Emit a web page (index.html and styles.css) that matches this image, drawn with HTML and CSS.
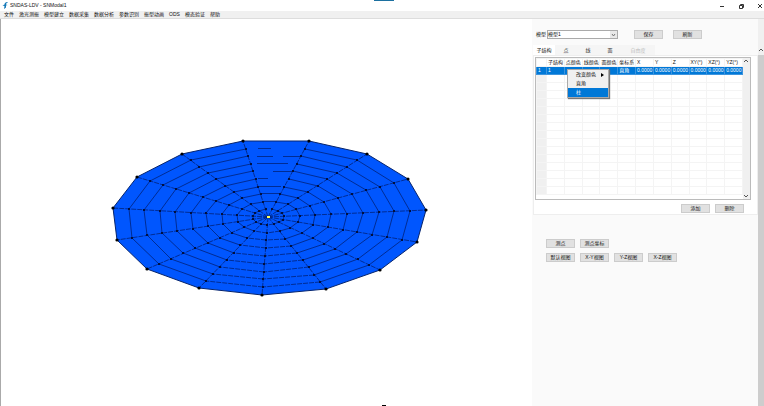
FILE: index.html
```
<!DOCTYPE html>
<html lang="zh-CN">
<head>
    <meta charset="UTF-8">
    <meta name="viewport" content="width=device-width, initial-scale=1.0">
    <title>SNDAS-LDV - SNModal1</title>
    <link rel="stylesheet" href="styles.css">
</head>
<body>
    <header class="titlebar">
        <svg class="logo" viewBox="0 0 12 14" width="6" height="7">
            <path d="M11 0 C7 0 5 2 5 5 L1 7 L5 8 L4 14 L8 11 L8 7 L11 6 L8 5 C8 3 9 2 11 2 Z" fill="#1479b8"/>
        </svg>
        <span class="title">SNDAS-LDV - SNModal1</span>
        <div class="top-handle"></div>
        <div class="window-buttons">
            <button class="win-btn" aria-label="最小化"><svg viewBox="0 0 6 6" width="6" height="6"><path d="M1 3.5h4"/></svg></button>
            <button class="win-btn" aria-label="还原"><svg viewBox="0 0 6 6" width="6" height="6"><path d="M1.5 2.5h3v3h-3zM2.5 2.5v-1h3v3h-1"/></svg></button>
            <button class="win-btn" aria-label="关闭"><svg viewBox="0 0 6 6" width="6" height="6"><path d="M1 1l4 4M5 1l-4 4"/></svg></button>
        </div>
    </header>

    <nav class="menubar">
        <a href="#">文件</a>
        <a href="#">激光测振</a>
        <a href="#">模型建立</a>
        <a href="#">数据采集</a>
        <a href="#">数据分析</a>
        <a href="#">参数识别</a>
        <a href="#">振型动画</a>
        <a href="#">ODS</a>
        <a href="#">模态验证</a>
        <a href="#">帮助</a>
    </nav>

    <main class="workspace">
        <section class="view">
            <svg class="mesh" id="mesh" viewBox="1 19 531 387"></svg>
        </section>

        <aside class="side">
            <div class="model-row">
                <label for="model">模型</label>
                <div class="select-box">
                    <select id="model"><option>模型1</option></select>
                    <svg class="select-arrow" viewBox="0 0 7 7" width="7" height="7"><path d="M2 3l1.5 2L5 3"/></svg>
                </div>
                <button class="button">保存</button>
                <button class="button">刷新</button>
            </div>

            <div class="tabs">
                <button class="tab active">子结构</button>
                <button class="tab">点</button>
                <button class="tab">线</button>
                <button class="tab">面</button>
                <button class="tab off" disabled>自由度</button>
            </div>

            <div class="tab-page">
                <div class="grid-box">
                    <div class="grid-wrap">
                        <table class="grid">
                            <colgroup><col class="c-num"><col span="11"></colgroup>
                            <thead>
                                <tr><th></th><th>子结构</th><th>点颜色</th><th>线颜色</th><th>面颜色</th><th>坐标系</th><th>X</th><th>Y</th><th>Z</th><th>XY(°)</th><th>XZ(°)</th><th>YZ(°)</th></tr>
                            </thead>
                            <tbody id="rows">
                                <tr class="selected"><td>1</td><td>1</td><td></td><td></td><td></td><td>直角</td><td>0.0000</td><td>0.0000</td><td>0.0000</td><td>0.0000</td><td>0.0000</td><td>0.0000</td></tr>
                            </tbody>
                        </table>
                    </div>
                    <div class="grid-scroll">
                        <svg viewBox="0 0 6 6" width="6" height="6"><path d="M1 4l2-2 2 2"/></svg>
                        <svg viewBox="0 0 6 6" width="6" height="6"><path d="M1 2l2 2 2-2"/></svg>
                    </div>
                    <div class="context-menu">
                        <button>改变颜色<svg viewBox="0 0 3 6" width="3" height="6"><path d="M0 1l3 2-3 2z"/></svg></button>
                        <button>直角</button>
                        <button class="current">柱</button>
                    </div>
                </div>
                <div class="grid-actions">
                    <button class="button">添加</button>
                    <button class="button">删除</button>
                </div>
            </div>

            <div class="view-buttons">
                <div class="button-row">
                    <button class="button">测点</button>
                    <button class="button">测点坐标</button>
                </div>
                <div class="button-row">
                    <button class="button">默认视图</button>
                    <button class="button">X-Y视图</button>
                    <button class="button">Y-Z视图</button>
                    <button class="button">X-Z视图</button>
                </div>
            </div>
        </aside>
        <div class="page-scroll"><svg viewBox="0 0 6 6" width="6" height="6"><path d="M1 4l2-2 2 2"/></svg></div>
    </main>

    <script>
        // empty rows of the table
        const rows = document.getElementById('rows');
        for (let i = 0; i < 15; i++) {
            const tr = document.createElement('tr');
            tr.innerHTML = '<td></td>'.repeat(12);
            rows.appendChild(tr);
        }

        // disc mesh: outer nodes, 10 rings
        const center = [268, 217];
        const outer = [
            [243, 141], [309, 141], [367, 154], [408, 179], [426, 210],
            [417, 242], [380, 270], [326, 289], [262, 295], [199, 288],
            [147, 269], [117, 240], [113, 208], [137, 177], [182, 154]
        ];
        const rings = 10;
        const node = (p, r) => [
            Math.round(center[0] + (p[0] - center[0]) * r / rings),
            Math.round(center[1] + (p[1] - center[1]) * r / rings)
        ];
        // visible parts of the rings between the two top spokes
        const topParts = {
            9: 'M258 148.5h13', 8: 'M257 156.5h16M283 156.5h17', 7: 'M257 163.5h31',
            6: 'M273 171.5h21', 5: 'M258 178.5h10', 4: 'M259 186.5h22',
            3: 'M262 193.5h19', 2: 'M263 201.5h14'
        };
        let svg = '<polygon class="disc" points="' + outer.join(' ') + '"/>';
        let nodes = '';
        outer.forEach((p, i) => {
            const next = outer[(i + 1) % outer.length];
            svg += `<path class="spoke" d="M${center}L${p}"/>`;
            for (let r = 1; r < rings; r++) {
                const a = node(p, r);
                const b = node(next, r);
                if (i > 0) {
                    svg += `<path class="ring${i === 7 || i === 8 ? ' dashed' : ''}" d="M${a}L${b}"/>`;
                } else if (topParts[r]) {
                    svg += `<path class="ring" d="${topParts[r]}"/>`;
                }
                nodes += `<rect class="node" x="${a[0] - 1}" y="${a[1] - 1}" width="2" height="2"/>`;
            }
            nodes += `<circle cx="${p[0]}" cy="${p[1]}" r="1.6"/>`;
        });
        svg += nodes;
        svg += '<rect class="origin" x="267" y="216" width="3" height="2"/>';
        svg += '<path d="M382 406v-1h4v1z"/>';
        document.getElementById('mesh').innerHTML = svg;
    </script>
</body>
</html>
```
FILE: styles.css
```
* {
    box-sizing: border-box;
}
body {
    margin: 0;
    height: 100vh;
    display: flex;
    flex-direction: column;
    overflow: hidden;
    background: #fff;
    color: #111;
    font-family: "Liberation Sans", "Noto Sans CJK SC", sans-serif;
    font-size: 5px;
    line-height: 7px;
}
button, select {
    font: inherit;
    color: inherit;
    margin: 0;
    padding: 0;
    border: none;
    background: none;
}
svg {
    display: block;
}

/* title */
.titlebar {
    position: relative;
    display: flex;
    align-items: center;
    height: 11px;
    padding-left: 2px;
    flex-shrink: 0;
}
.title {
    margin-left: 2px;
}
.top-handle {
    position: absolute;
    top: 0;
    left: 49%;
    width: 20px;
    height: 1px;
    background: #1c70a0;
}
.window-buttons {
    display: flex;
    gap: 13px;
    margin-left: auto;
    padding-right: 1px;
}
.win-btn path {
    fill: none;
    stroke: #333;
    stroke-width: 1;
}

.menubar {
    display: flex;
    gap: 5px;
    height: 8px;
    padding-left: 4px;
    flex-shrink: 0;
    background: #f0f0f0;
    border-bottom: 1px solid #ddd;
}
.menubar a {
    color: #111;
    text-decoration: none;
}

.workspace {
    display: flex;
    flex: 1;
    min-height: 0;
}
.view {
    flex: 1;
    min-width: 0;
    border-left: 1px solid #aaa;
}
.mesh {
    width: 100%;
    height: 100%;
}
.disc {
    fill: #0056fe;
    stroke: #06246c;
    stroke-width: 1;
}
.spoke, .ring {
    fill: none;
    stroke: #001a66;
    stroke-width: 0.7;
}
.spoke, .dashed {
    stroke-dasharray: 5 1;
}
.node {
    fill: #001040;
}
.origin {
    fill: #ffff5a;
}

/* right panel */
.side {
    width: 30%;
    max-width: 226px;
    flex-shrink: 0;
    padding: 11px 0 0 1px;
    background: #fafafa;
}
.model-row {
    display: flex;
    align-items: center;
    padding-left: 3px;
}
.select-box {
    position: relative;
    width: 71px;
    margin-left: 1px;
}
.select-box select {
    display: block;
    width: 100%;
    height: 9px;
    appearance: none;
    border: 1px solid #aaa;
    background: #fff;
}
.select-arrow {
    position: absolute;
    right: 1px;
    top: 1px;
    background: #e8e8e8;
    fill: none;
    stroke: #777;
}
.button {
    width: 29px;
    height: 9px;
    line-height: 7px;
    background: #e1e1e1;
    border: 1px solid #ccc;
    white-space: nowrap;
}
.model-row .button {
    margin-left: 16px;
}
.model-row .button + .button {
    margin-left: 10px;
}

.tabs {
    display: flex;
    margin-top: 6px;
}
.tab {
    width: 22px;
    height: 10px;
    background: #f5f5f5;
    color: #333;
}
.tab.active {
    background: #fff;
    color: #111;
}
.tab.off {
    width: 34px;
    color: #bbb;
}
.tab-page {
    padding: 1px 6px 1px 1px;
    background: #fff;
    border: 1px solid #eee;
}
.grid-box {
    position: relative;
    display: flex;
    height: 143px;
    background: #fff;
    border: 1px solid #bbb;
}
.grid-wrap {
    flex: 1;
    min-width: 0;
}
.grid {
    width: 100%;
    border-collapse: collapse;
    table-layout: fixed;
}
.c-num {
    width: 10px;
}
.grid th, .grid td {
    height: 8px;
    padding: 0 0 0 1px;
    overflow: hidden;
    border: 1px solid #f4f4f4;
    font-weight: normal;
    line-height: 7px;
    text-align: left;
    white-space: nowrap;
}
.grid td:first-child {
    background: #f0f0f0;
}
.grid tbody .selected td {
    background: #0078d7;
    border-color: #3c94de;
    color: #fff;
}
.grid-scroll {
    display: flex;
    flex-direction: column;
    justify-content: space-between;
    width: 7px;
    background: #f0f0f0;
}
.grid-scroll path, .page-scroll path {
    fill: none;
    stroke: #555;
}
.context-menu {
    position: absolute;
    top: 11px;
    left: 31px;
    width: 42px;
    background: #f0f0f0;
    border: 1px solid #aaa;
    box-shadow: 1px 1px 1px #777;
}
.context-menu button {
    display: flex;
    align-items: center;
    justify-content: space-between;
    width: 100%;
    height: 9px;
    padding: 0 4px 0 8px;
    white-space: nowrap;
}
.context-menu .current {
    background: #0078d7;
    color: #fff;
}
.grid-actions {
    display: flex;
    justify-content: flex-end;
    gap: 5px;
    padding: 4px 7px 0 0;
}

.view-buttons {
    display: flex;
    flex-direction: column;
    gap: 5px;
    padding-left: 13px;
    margin-top: 24px;
}
.button-row {
    display: flex;
    gap: 5px;
}
.page-scroll {
    width: 6px;
    flex-shrink: 0;
    padding-top: 28px;
    background: linear-gradient(#f0f0f0 36px, #cdcdcd 36px);
}
```
